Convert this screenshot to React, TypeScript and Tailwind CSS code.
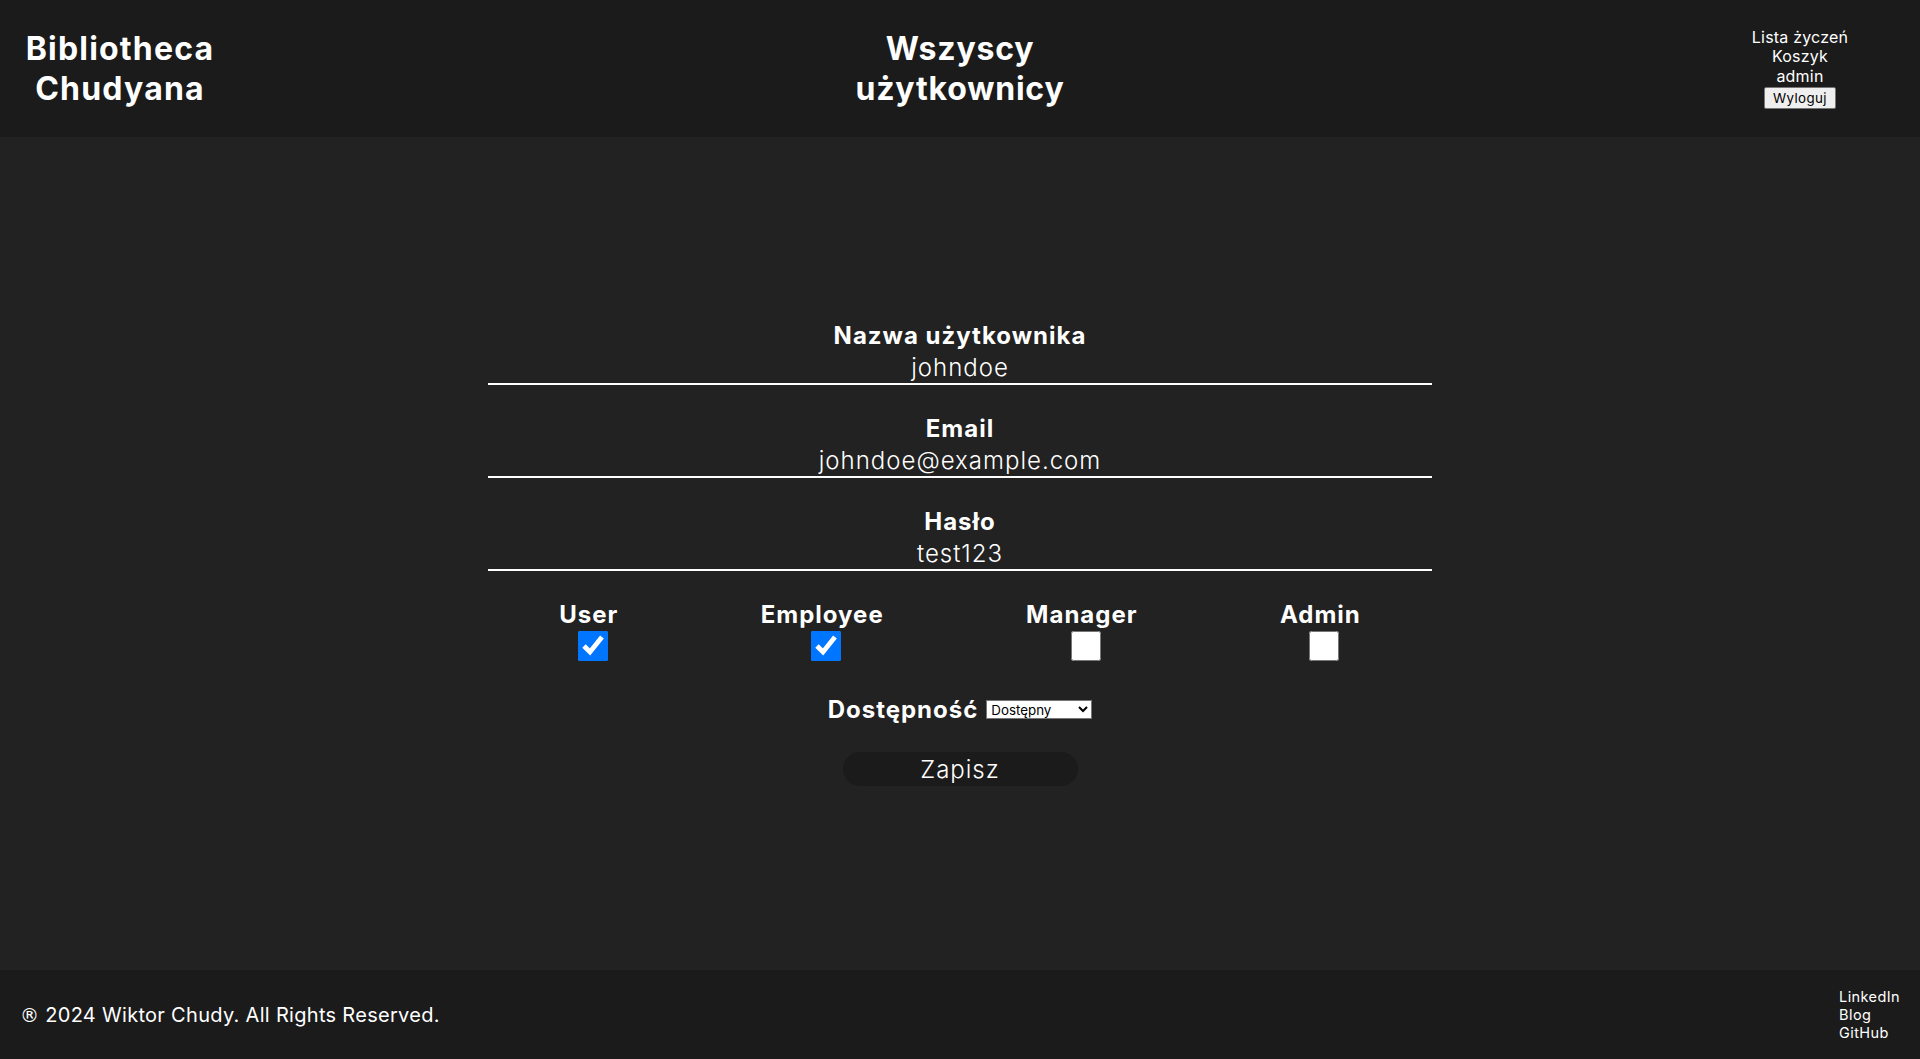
// Admin view: edit a single user (username, email, password, roles, availability).

const ROLES = [
  { key: "user", label: "User", checked: true },
  { key: "employee", label: "Employee", checked: true },
  { key: "manager", label: "Manager", checked: false },
  { key: "admin", label: "Admin", checked: false },
];

function Header() {
  return (
    <header className="grid h-[137px] grid-cols-[240px_1fr_240px] items-center bg-[#1b1b1b] text-center text-white">
      <h1 className="text-[32px] font-bold leading-[40px] tracking-[1.2px]">
        Bibliotheca Chudyana
      </h1>
      <h1 className="mx-auto max-w-[240px] text-[32px] font-bold leading-[40px] tracking-[0.8px]">
        Wszyscy użytkownicy
      </h1>
      <nav className="flex flex-col items-center text-[16px] leading-[19.5px] tracking-[0.2px]">
        <a>Lista życzeń</a>
        <a>Koszyk</a>
        <a>admin</a>
        <button className="mt-[1px] rounded-[2px] border border-[#767676] bg-[#efefef] px-[8px] py-[1px] text-[13.33px] leading-[18px] tracking-[0.4px] text-black">
          Wyloguj
        </button>
      </nav>
    </header>
  );
}

function Field({ label, value }: { label: string; value: string }) {
  return (
    <div className="mb-[29px] flex flex-col items-center">
      <label className="text-[24px] font-bold leading-[29px] tracking-[1px]">
        {label}
      </label>
      <input
        defaultValue={value}
        className="mt-[2px] w-full border-b-2 border-white bg-transparent py-[1px] text-center text-[24px] font-light leading-[29px] tracking-[1px] text-white outline-none"
      />
    </div>
  );
}

function Footer() {
  return (
    <footer className="flex h-[89px] items-center justify-between bg-[#1b1b1b] pl-[20px] pr-[20px] text-white">
      <p className="text-[20px] leading-[24px] tracking-[0.3px]">
        <span className="font-['DejaVu_Sans',sans-serif] text-[19px]">®</span>{" "}
        2024 Wiktor Chudy. All Rights Reserved.
      </p>
      <div className="flex flex-col text-[14.5px] leading-[18px] tracking-[0.4px]">
        <a>LinkedIn</a>
        <a>Blog</a>
        <a>GitHub</a>
      </div>
    </footer>
  );
}

export default function App() {
  return (
    <div className="flex min-h-[1059px] flex-col bg-[#222222] font-['Inter',sans-serif] text-white">
      <Header />
      <main className="flex flex-1 items-center justify-center">
        <form className="w-[944px]" onSubmit={(e) => e.preventDefault()}>
          <Field label="Nazwa użytkownika" value="johndoe" />
          <Field label="Email" value="johndoe@example.com" />
          <Field label="Hasło" value="test123" />

          {/* Roles */}
          <div className="flex justify-around">
            {ROLES.map((r) => (
              <div key={r.key} className="flex flex-col items-center">
                <span className="text-[24px] font-bold leading-[29px] tracking-[1px]">
                  {r.label}
                </span>
                <input
                  type="checkbox"
                  defaultChecked={r.checked}
                  className="ml-2 mt-[2px] h-[30px] w-[30px] accent-[#0075ff]"
                />
              </div>
            ))}
          </div>

          <div className="mt-[34px] flex items-center justify-center gap-[8px]">
            <span className="text-[24px] font-bold leading-[29px] tracking-[1px]">
              Dostępność
            </span>
            <select
              defaultValue="available"
              className="h-[19px] w-[106px] border border-[#767676] bg-white text-[13.33px] leading-[16px] text-black"
            >
              <option value="available">Dostępny</option>
              <option value="unavailable">Niedostępny</option>
            </select>
          </div>

          <div className="mt-[28px] flex justify-center">
            <button
              type="submit"
              className="h-[34px] w-[235px] rounded-full bg-[#1b1b1b] text-[24px] font-light leading-[29px] tracking-[1px] text-white"
            >
              Zapisz
            </button>
          </div>
        </form>
      </main>
      <Footer />
    </div>
  );
}
